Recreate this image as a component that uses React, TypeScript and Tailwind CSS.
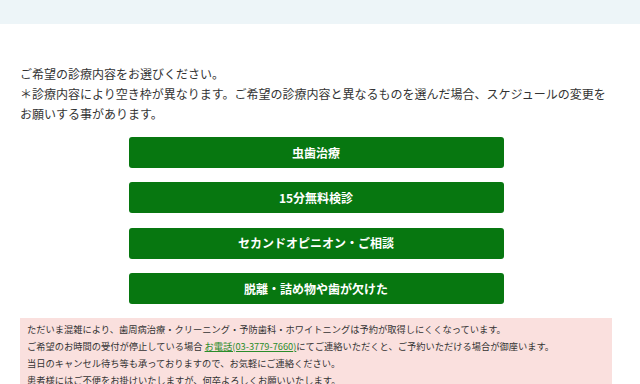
const font = { fontFamily: '"Noto Sans CJK JP", "Noto Sans", sans-serif' };

const menus = [
  "虫歯治療",
  "15分無料検診",
  "セカンドオピニオン・ご相談",
  "脱離・詰め物や歯が欠けた",
];

export default function App() {
  return (
    <div className="min-h-[384px] bg-white text-[#333]" style={font}>
      {/* header strip */}
      <div className="h-6 bg-[#edf5f8]" />

      <main className="ml-5 w-[592px] pt-10">
        <div className="text-[12px] leading-5">
          <p>ご希望の診療内容をお選びください。</p>
          <p>
            ＊診療内容により空き枠が異なります。ご希望の診療内容と異なるものを選んだ場合、スケジュールの変更をお願いする事があります。
          </p>
        </div>

        <div className="mt-[13px] flex flex-col items-center gap-[14.4px]">
          {menus.map((label) => (
            <button
              key={label}
              className="flex h-[31px] w-[375px] items-center justify-center rounded-[3px] bg-[#077710] text-[12px] font-bold text-white"
            >
              {label}
            </button>
          ))}
        </div>

        <div className="mt-[14px] bg-[#fae0de] px-[7px] pt-[3px] pb-2 text-[9.25px] leading-[17px] text-[#333]">
          <p>ただいま混雑により、歯周病治療・クリーニング・予防歯科・ホワイトニングは予約が取得しにくくなっています。</p>
          <p>
            ご希望のお時間の受付が停止している場合{" "}
            <a href="#" className="text-[#2a8c2a] underline">
              お電話(03-3779-7660)
            </a>
            にてご連絡いただくと、ご予約いただける場合が御座います。
          </p>
          <p>当日のキャンセル待ち等も承っておりますので、お気軽にご連絡ください。</p>
          <p>患者様にはご不便をお掛けいたしますが、何卒よろしくお願いいたします。</p>
        </div>
      </main>
    </div>
  );
}
